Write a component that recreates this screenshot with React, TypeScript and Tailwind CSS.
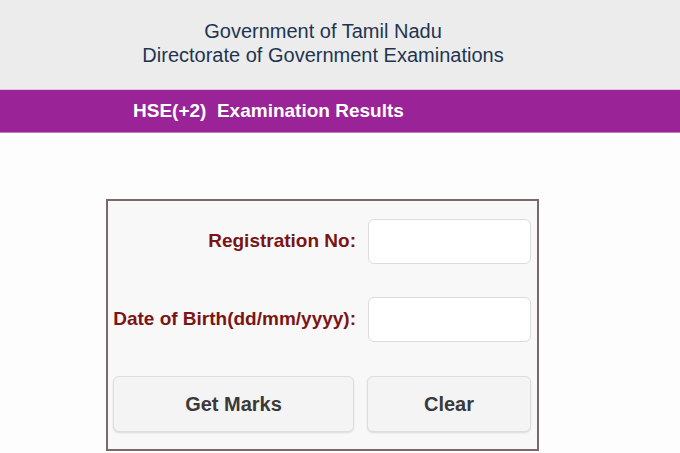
// Results lookup page: header, title band and the registration / DOB form.

export default function App() {
  return (
    <div className="min-h-screen bg-[#fdfdfd] font-['Liberation_Sans',Arial,sans-serif]">
      <header className="flex h-[89px] flex-col items-center justify-center bg-[#ececec] pr-[34px] pb-1 text-[20px] leading-[24px] text-[#1e3552]">
        <p>Government of Tamil Nadu</p>
        <p>Directorate of Government Examinations</p>
      </header>

      <div className="border-t border-[#e9b6e6] border-b border-b-[#c27bbf] bg-[#9b2398]">
        <h1 className="flex h-[42px] items-center pl-[133px] text-[19px] font-bold text-white">
          HSE(+2)&nbsp; Examination Results
        </h1>
      </div>

      <div className="pl-[106px] pt-[66px]">
        <form className="w-[433px] border-2 border-[#7b6868] bg-[#f8f8f8] px-[5px] pt-[18px] pb-[17px]">
          <div className="flex items-center gap-[12px]">
            <label className="w-[243px] text-right text-[19px] font-bold text-[#7b1515]">
              Registration No:
            </label>
            <input className="h-[45px] w-[163px] rounded-[6px] border border-[#dcdcdc] bg-white" />
          </div>
          <div className="mt-[33px] flex items-center gap-[12px]">
            <label className="w-[243px] whitespace-nowrap text-right text-[19px] font-bold text-[#7b1515]">
              Date of Birth(dd/mm/yyyy):
            </label>
            <input className="h-[45px] w-[163px] rounded-[6px] border border-[#dcdcdc] bg-white" />
          </div>
          <div className="mt-[34px] flex gap-[13px]">
            <button
              type="button"
              className="h-[56px] w-[241px] rounded-[6px] border border-[#dedede] bg-[#f4f4f4] text-[20px] font-bold text-[#3a3a3a] shadow-[0_1px_2px_rgba(0,0,0,0.12)]"
            >
              Get Marks
            </button>
            <button
              type="button"
              className="h-[56px] w-[164px] rounded-[6px] border border-[#dedede] bg-[#f4f4f4] text-[20px] font-bold text-[#3a3a3a] shadow-[0_1px_2px_rgba(0,0,0,0.12)]"
            >
              Clear
            </button>
          </div>
        </form>
      </div>
    </div>
  )
}
